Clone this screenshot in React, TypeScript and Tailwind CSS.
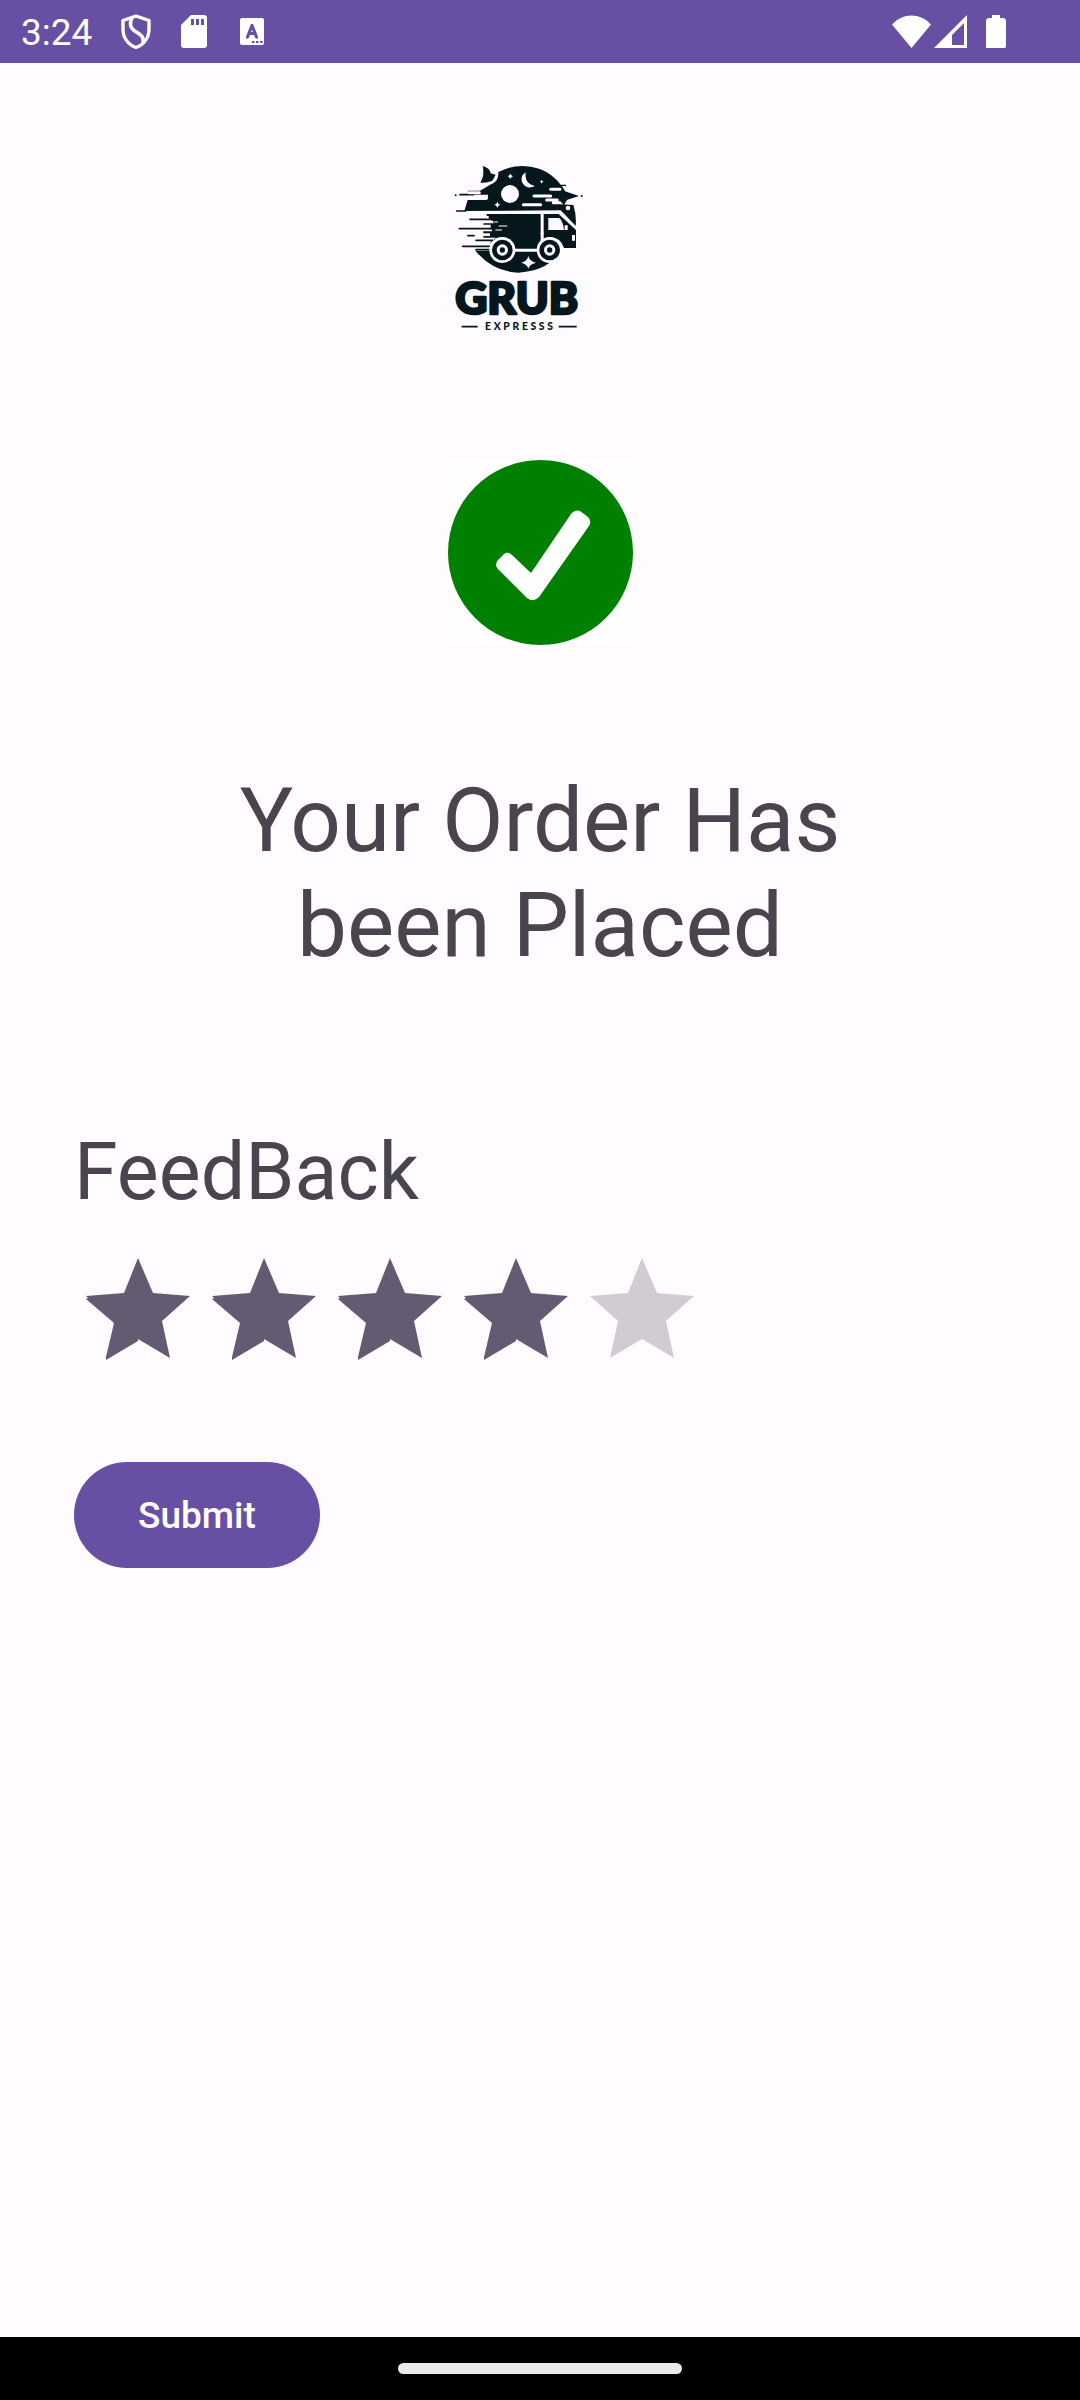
import { useState } from "react";

function ShieldIcon() {
  return (
    <svg viewBox="0 0 30 36" className="h-9 w-[30px]" fill="none" stroke="white" strokeWidth="3.400" strokeLinejoin="round">
      <path d="M15 2 2 6.500V15c0 8.500 5 15.500 13 18.500C23 30.500 28 23.500 28 15V6.500Z" />
      <path d="M11 3.500C8 10 9 14 14.500 17.500C20 21 23 22 22 29" strokeWidth="3.600" />
    </svg>
  );
}

function SdCardIcon() {
  return (
    <svg viewBox="0 0 26 33" className="h-[33px] w-[26px]">
      <path
        fill="white"
        fillRule="evenodd"
        d="M10 0H23a3 3 0 0 1 3 3V30a3 3 0 0 1-3 3H3a3 3 0 0 1-3-3V10ZM10 4v6h3V4Zm5 0v6h3V4Zm5 0v6h3V4Z"
      />
    </svg>
  );
}

function LetterIcon() {
  return (
    <svg viewBox="0 0 24 27" className="h-[27px] w-6">
      <rect width="24" height="27" rx="2" fill="white" />
      <path d="M7.500 19 12 7.500 16.500 19M9 15.500h6" fill="none" stroke="#6750a4" strokeWidth="3.200" strokeLinecap="round" strokeLinejoin="round" />
      <path d="M12 23h2.500v2H12zM16 23h2.500v2H16zM20 23h2.500v2H20z" fill="#6750a4" />
    </svg>
  );
}

function StatusBar() {
  return (
    <header className="flex h-[63px] items-center justify-between bg-[#6750a4] pr-[73px] pl-[21px] text-white">
      <div className="flex items-center">
        <time className="w-[100px] pt-[2px] text-[37px] leading-[44px]">3:24</time>
        <ShieldIcon />
        <span className="w-[30px]" />
        <SdCardIcon />
        <span className="w-[33px]" />
        <LetterIcon />
      </div>
      <svg viewBox="0 0 115 34" className="h-[34px] w-[115px]" fill="white" role="img" aria-label="Wi-Fi, signal, battery">
        <path d="M0 9.500C11-2.500 28-2.500 39 9.500L19.500 33Z" />
        <path fillRule="evenodd" d="M75 0V33H42ZM72 8 60 20V30H72Z" />
        <path d="M100 0h8v3h4l2 2V32l-1 1H94V5l2-2h4Z" />
      </svg>
    </header>
  );
}

function Logo() {
  return (
    <svg viewBox="0 0 510 600" className="mr-[50px] h-[200px] w-[170px]" role="img" aria-label="Grub Expresss">
      <g fill="#06161d">
        <path d="M103 183 113 150H170V140H174V134H115V122H150L178 106Q203 96 205 66Q265 35 330 57Q368 72 392 104H408V108H396L405 124 447 138 412 149 401 166 396 158 390 163 430 165Q440 195 437 228L392 181Z" />
        <path d="M158 48Q180 54 182 70L197 74Q192 84 186 93Q170 100 151 98Q165 75 158 48Z" />
        <circle cx="77" cy="136" r="3" />
        <circle cx="455" cy="138" r="3" />
        <path d="M170 192H332V296H256Q246 262 215 262Q190 262 178 284L184 272H196V263H160V258H180V250H160V244H186V238H182V222H190V212H184V206H176V198H170Z" />
        <path d="M341 192H386L438 240V294H402Q392 262 360 262Q349 262 341 267Z" />
        <path d="M136 302H180Q192 336 218 336Q246 336 256 305H322Q333 336 360 336Q334 362 265 368Q188 365 136 302Z" />
        <path d="M322 305H358V340H322Z" />
      </g>
      <g stroke="#06161d" strokeWidth="5" strokeLinecap="round">
        <path d="M80 183h30M90 134h40M120 208h70M88 236h110M114 257h18M138 271h50M98 289h86M138 299h40M162 222h26" />
      </g>
      <g stroke="#fffbff" strokeWidth="9" strokeLinecap="round">
        <path d="M118 128h30M120 144h50M312 138h50M280 164h52M362 118h28M350 150h32M370 158h20" />
        <path d="M186 98Q202 92 202 70" fill="none" strokeWidth="6" />
      </g>
      <g fill="#fffbff">
        <circle cx="240" cy="132" r="27" />
        <path d="M287 67Q283 102 315 108Q290 120 277 98Q269 80 287 67Z" />
        <path d="M241 71 244 76 249 79 244 82 241 87 238 82 233 79 238 76ZM202 155 205 161 211 164 205 167 202 174 199 167 193 164 199 161ZM335 89 337 93 341 95 337 97 335 101 333 97 329 95 333 93Z" />
        <circle cx="414" cy="174" r="7" />
        <path d="M355 204H388Q399 214 402 240H355Z" />
        <path d="M404 226h9v14h-9zM426 255h9v17h-9z" />
        <path d="M295 318Q298 334 318 338Q298 342 295 356Q292 342 274 338Q292 334 295 318Z" />
      </g>
      <path d="M108 187H390L438 233" fill="none" stroke="#fffbff" strokeWidth="6" />
      <path d="M336 190V262M332 250h9" fill="none" stroke="#fffbff" strokeWidth="4" />
      <path d="M196 240h20M192 216h12M206 228h26" stroke="#fffbff" strokeWidth="3" />
      {[217, 359].map((cx) => (
        <g key={cx}>
          <circle cx={cx} cy="300" r="39" fill="#fffbff" />
          <circle cx={cx} cy="300" r="31" fill="#06161d" />
          <circle cx={cx} cy="300" r="17" fill="#fffbff" />
          <circle cx={cx} cy="300" r="8" fill="#06161d" />
        </g>
      ))}
      <path d="M256 300h66" stroke="#fffbff" strokeWidth="5" />
      <path d="M95 530h48M386 530h54" stroke="#06161d" strokeWidth="5" />
      <text
        x="260"
        y="493"
        textAnchor="middle"
        fill="#06161d"
        stroke="#06161d"
        strokeWidth="8"
        strokeLinejoin="round"
        className="font-[Lato] text-[133px] font-black"
      >
        GRUB
      </text>
      <text x="271" y="541" textAnchor="middle" fill="#06161d" className="font-[Lato] text-[31px] font-black tracking-[8px]">
        EXPRESSS
      </text>
    </svg>
  );
}

function Confirmation() {
  return (
    <svg viewBox="0 0 186 186" className="mt-[109px] h-[186px] w-[186px] bg-[#fffeff]" role="img" aria-label="Success">
      <circle cx="93.500" cy="93.500" r="92.500" fill="#008000" />
      <path
        d="M57 95Q61 92 65 96L84 114 124 55Q128 50 133 52L141 58Q145 62 142 67L92 138Q87 144 80 139L51 110Q47 106 51 101Z"
        fill="white"
      />
    </svg>
  );
}

function Rating() {
  const [rating, setRating] = useState(4);
  return (
    <fieldset className="mt-8 ml-px flex" aria-label="Rating">
      {[1, 2, 3, 4, 5].map((n) => (
        <label key={n} className="relative cursor-pointer">
          <input
            type="radio"
            name="rating"
            className="sr-only"
            aria-label={`${n} stars`}
            checked={rating === n}
            onChange={() => setRating(n)}
          />
          <svg viewBox="0 0 126 126" className="h-[126px] w-[126px]">
            {n <= rating ? (
              <path
                d="M63 7 78 42 115 45 87 70 95 107 63 88V90L31 109V106L39 72 11 48 13 47 11 45 49 42Z"
                fill="#625b71"
              />
            ) : (
              <path d="M63 7 78 42 115 45 87 70 95 107 63 88 31 107 39 70 11 45 49 42Z" fill="#d1ccd1" />
            )}
          </svg>
        </label>
      ))}
    </fieldset>
  );
}

export default function App() {
  return (
    <div className="flex min-h-screen flex-col bg-[#fffbff] font-[Roboto,sans-serif] text-[#49454f]">
      <StatusBar />
      <main className="flex flex-1 flex-col items-center pt-[87px]">
        <Logo />
        <Confirmation />
        <h1 className="mt-[123px] max-w-[660px] text-center text-[89px] leading-[105px]">Your Order Has been Placed</h1>
        <form className="mt-[148px] w-full px-[74px]" onSubmit={(e) => e.preventDefault()}>
          <h2 className="text-[79px] leading-[93px]">FeedBack</h2>
          <Rating />
          <button type="submit" className="mt-[85px] h-[106px] rounded-full bg-[#6750a4] px-16 pt-[2px] text-[37px] font-medium text-white">
            Submit
          </button>
        </form>
      </main>
      <footer className="flex h-[63px] items-center justify-center bg-black">
        <div className="h-[11px] w-[284px] rounded-full bg-[#ebebeb]" />
      </footer>
    </div>
  );
}
